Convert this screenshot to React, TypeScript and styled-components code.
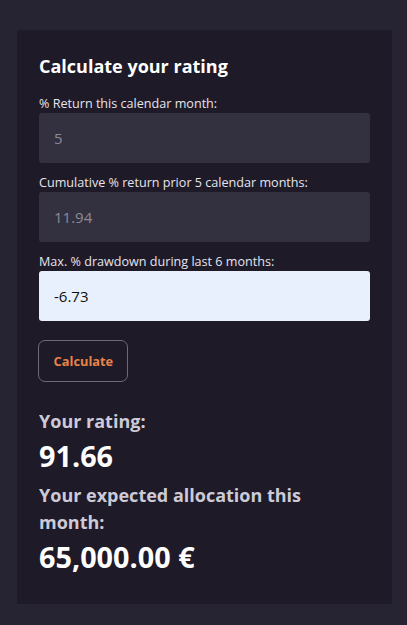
import React, { useState } from 'react';
import styled, { createGlobalStyle } from 'styled-components';

const GlobalStyle = createGlobalStyle`
  body {
    margin: 0;
    background: #262433;
    font-family: 'Open Sans', 'Noto Sans', sans-serif;
  }
`;

const Page = styled.div`
  padding: 30px 15px 21px 17px;
`;

const Card = styled.section`
  background: #1e1a27;
  padding: 24px 22px 29.5px;
  color: #ffffff;
`;

const Title = styled.h2`
  margin: 0 0 15.5px;
  font-size: 18px;
  line-height: 24px;
  font-weight: 700;
`;

const Field = styled.div`
  display: flex;
  flex-direction: column;
  margin-bottom: 9.5px;
`;

const Label = styled.label`
  font-size: 12.6px;
  line-height: 19.5px;
  color: #e6e4ee;
`;

const Input = styled.input<{ $filled?: boolean }>`
  box-sizing: border-box;
  height: 50px;
  width: 100%;
  border: none;
  border-radius: 3px;
  padding: 0 15px;
  font-family: inherit;
  font-size: 15px;
  background: ${({ $filled }) => ($filled ? '#e8f0fe' : '#33313f')};
  color: ${({ $filled }) => ($filled ? '#111111' : '#8c8a96')};
  outline: none;
`;

const Button = styled.button`
  align-self: flex-start;
  margin: 9.5px 0 0 -0.7px;
  height: 42px;
  padding: 0 14.3px;
  background: transparent;
  border: 1px solid #6e6a78;
  border-radius: 7px;
  color: #e8834a;
  font-family: inherit;
  font-size: 12.8px;
  font-weight: 700;
  cursor: pointer;
`;

const ResultLabel = styled.h3<{ $gap: number }>`
  margin: ${({ $gap }) => $gap}px 0 0;
  font-size: 18px;
  line-height: 27px;
  font-weight: 700;
  color: #cdcad8;
`;

const ResultValue = styled.div`
  margin-top: 4.2px;
  font-size: 28.8px;
  line-height: 34.5px;
  font-weight: 700;
  color: #ffffff;
`;

const fields = [
  { label: '% Return this calendar month:', value: '5' },
  { label: 'Cumulative % return prior 5 calendar months:', value: '11.94' },
  { label: 'Max. % drawdown during last 6 months:', value: '-6.73', filled: true },
];

const App = () => {
  const [values, setValues] = useState(fields.map((f) => f.value));

  return (
    <Page>
      <GlobalStyle />
      <Card>
        <Title>Calculate your rating</Title>
        {fields.map((f, i) => (
          <Field key={f.label}>
            <Label htmlFor={`field-${i}`}>{f.label}</Label>
            <Input
              id={`field-${i}`}
              $filled={f.filled}
              value={values[i]}
              onChange={(e) => {
                const next = [...values];
                next[i] = e.target.value;
                setValues(next);
              }}
            />
          </Field>
        ))}
        <Button type="button">Calculate</Button>
        <ResultLabel $gap={26}>Your rating:</ResultLabel>
        <ResultValue>91.66</ResultValue>
        <ResultLabel $gap={8.5}>Your expected allocation this month:</ResultLabel>
        <ResultValue>65,000.00 €</ResultValue>
      </Card>
    </Page>
  );
};

export default App;
